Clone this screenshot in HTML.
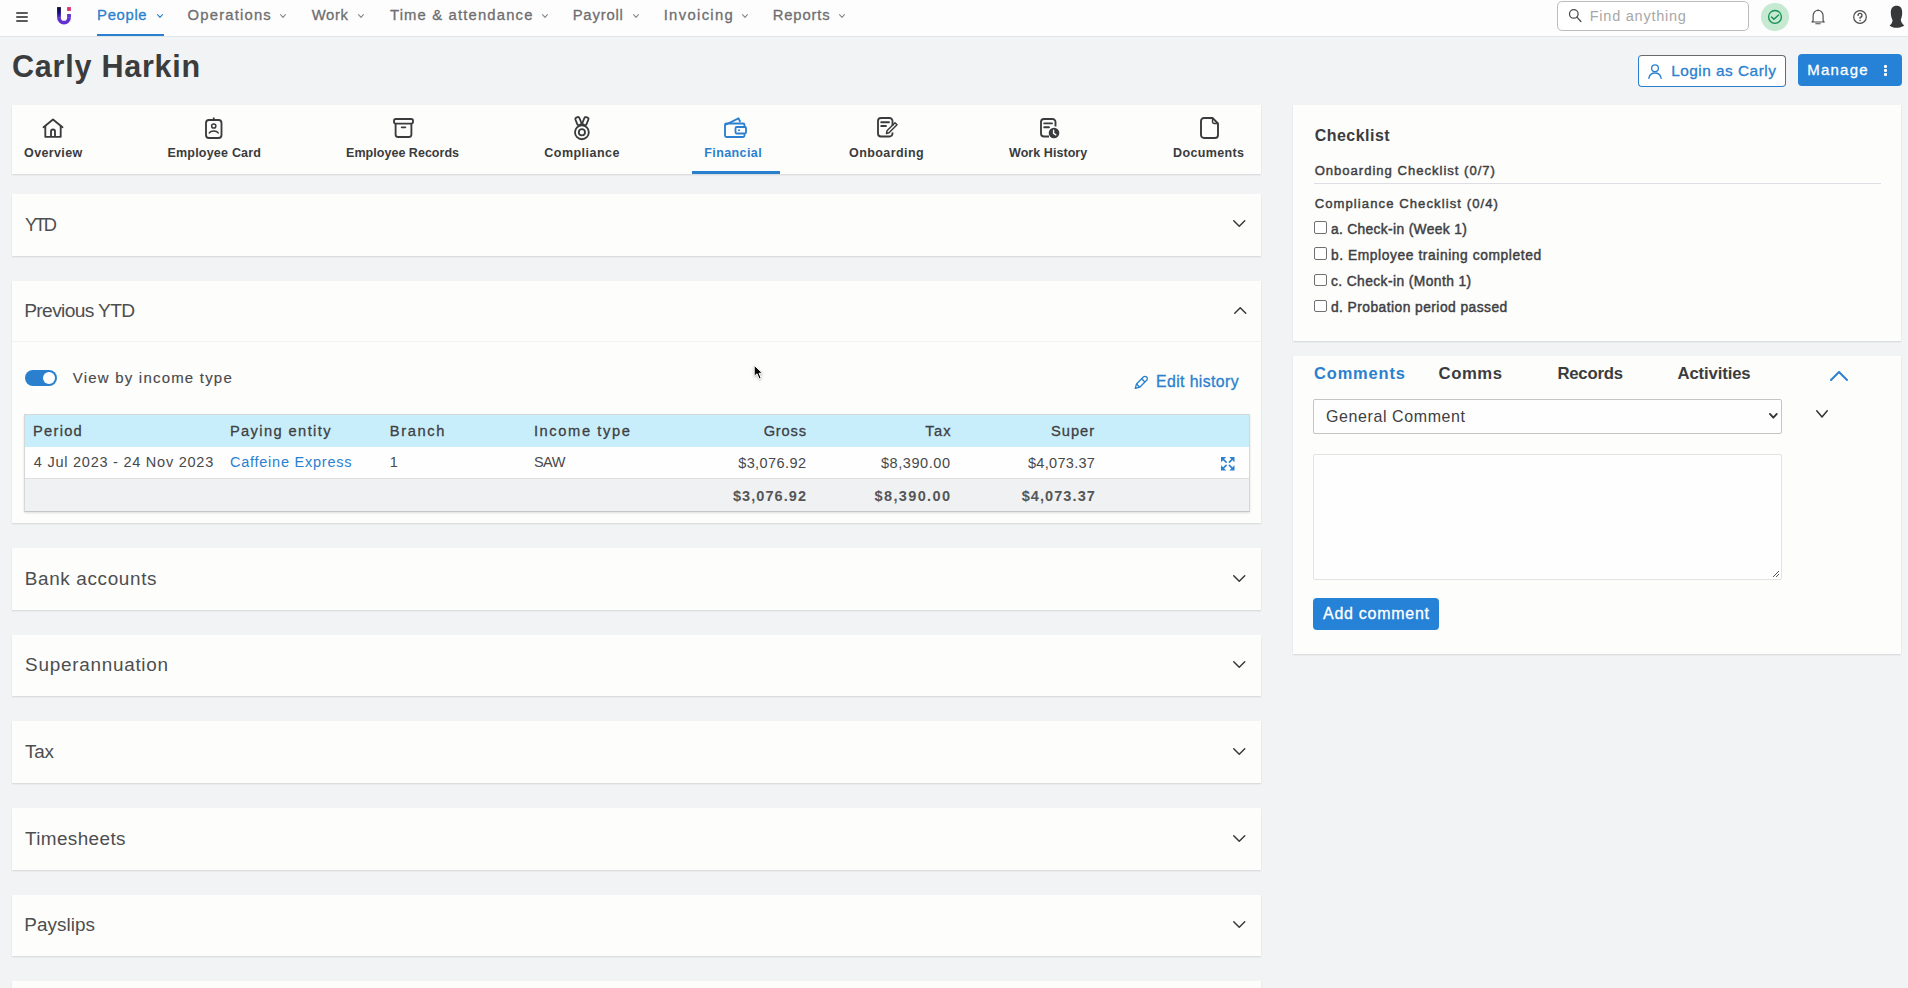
<!DOCTYPE html>
<html><head><meta charset="utf-8"><style>
html,body{margin:0;padding:0;}
body{width:1908px;height:988px;overflow:hidden;position:relative;background:#f1f3f4;font-family:"Liberation Sans",sans-serif;}
.t{position:absolute;white-space:pre;}
.b{position:absolute;}
.s{position:absolute;overflow:visible;}
</style></head><body>
<div class="b" style="left:0px;top:0px;width:1908px;height:37px;background:#fdfdfd;border-bottom:1px solid #dfe6ea;box-sizing:border-box;"></div>
<div class="b" style="left:16px;top:12.3px;width:12px;height:1.8000000000000007px;background:#5a5a5a;border-radius:1px;"></div>
<div class="b" style="left:16px;top:16.2px;width:12px;height:1.8000000000000007px;background:#5a5a5a;border-radius:1px;"></div>
<div class="b" style="left:16px;top:20.1px;width:12px;height:1.8000000000000007px;background:#5a5a5a;border-radius:1px;"></div>
<svg class="s" style="left:57px;top:7px;" width="14" height="18" viewBox="0 0 14 18"><defs><linearGradient id="lg" x1="0" y1="0" x2="0" y2="1"><stop offset="0" stop-color="#06052e"/><stop offset="0.55" stop-color="#1a0d8a"/><stop offset="1" stop-color="#6433cc"/></linearGradient></defs><rect x="0.1" y="0.1" width="3.8" height="10.8" fill="url(#lg)"/><path d="M2 10.7 A5.0 5.0 0 0 0 12 10.7" fill="none" stroke="#6231cf" stroke-width="3.8"/><rect x="10.1" y="7" width="3.8" height="3.8" fill="#6231cf"/><rect x="10.1" y="0.1" width="3.8" height="3.8" fill="#dc2f6e"/></svg>
<div class="t" style="left:97.10px;top:8.05px;font-size:14.83px;line-height:14.83px;letter-spacing:0.668px;font-weight:400;color:#2a80cf;-webkit-text-stroke:0.3px #2a80cf;">People</div>
<svg class="s" style="left:157px;top:14px;" width="6" height="4" viewBox="0 0 6 4"><polyline points="0.55,0.55 3.0,3.45 5.45,0.55" fill="none" stroke="#2a80cf" stroke-width="1.1" stroke-linecap="round" stroke-linejoin="round"/></svg>
<div class="b" style="left:97px;top:34px;width:67px;height:2px;background:#2a80cf;"></div>
<div class="t" style="left:187.56px;top:8.05px;font-size:14.83px;line-height:14.83px;letter-spacing:1.184px;font-weight:400;color:#6e6e70;-webkit-text-stroke:0.3px #6e6e70;">Operations</div>
<svg class="s" style="left:280px;top:14px;" width="6" height="4" viewBox="0 0 6 4"><polyline points="0.55,0.55 3.0,3.45 5.45,0.55" fill="none" stroke="#8a8a8a" stroke-width="1.1" stroke-linecap="round" stroke-linejoin="round"/></svg>
<div class="t" style="left:311.72px;top:8.05px;font-size:14.83px;line-height:14.83px;letter-spacing:0.627px;font-weight:400;color:#6e6e70;-webkit-text-stroke:0.3px #6e6e70;">Work</div>
<svg class="s" style="left:358px;top:14px;" width="6" height="4" viewBox="0 0 6 4"><polyline points="0.55,0.55 3.0,3.45 5.45,0.55" fill="none" stroke="#8a8a8a" stroke-width="1.1" stroke-linecap="round" stroke-linejoin="round"/></svg>
<div class="t" style="left:390.00px;top:8.05px;font-size:14.83px;line-height:14.83px;letter-spacing:1.154px;font-weight:400;color:#6e6e70;-webkit-text-stroke:0.3px #6e6e70;">Time &amp; attendance</div>
<svg class="s" style="left:542.3px;top:14px;" width="6" height="4" viewBox="0 0 6 4"><polyline points="0.55,0.55 3.0,3.45 5.45,0.55" fill="none" stroke="#8a8a8a" stroke-width="1.1" stroke-linecap="round" stroke-linejoin="round"/></svg>
<div class="t" style="left:572.66px;top:8.05px;font-size:14.83px;line-height:14.83px;letter-spacing:0.823px;font-weight:400;color:#6e6e70;-webkit-text-stroke:0.3px #6e6e70;">Payroll</div>
<svg class="s" style="left:632.6px;top:14px;" width="6" height="4" viewBox="0 0 6 4"><polyline points="0.55,0.55 3.0,3.45 5.45,0.55" fill="none" stroke="#8a8a8a" stroke-width="1.1" stroke-linecap="round" stroke-linejoin="round"/></svg>
<div class="t" style="left:663.66px;top:8.05px;font-size:14.83px;line-height:14.83px;letter-spacing:1.330px;font-weight:400;color:#6e6e70;-webkit-text-stroke:0.3px #6e6e70;">Invoicing</div>
<svg class="s" style="left:742px;top:14px;" width="6" height="4" viewBox="0 0 6 4"><polyline points="0.55,0.55 3.0,3.45 5.45,0.55" fill="none" stroke="#8a8a8a" stroke-width="1.1" stroke-linecap="round" stroke-linejoin="round"/></svg>
<div class="t" style="left:772.66px;top:8.05px;font-size:14.83px;line-height:14.83px;letter-spacing:0.860px;font-weight:400;color:#6e6e70;-webkit-text-stroke:0.3px #6e6e70;">Reports</div>
<svg class="s" style="left:838.9px;top:14px;" width="6" height="4" viewBox="0 0 6 4"><polyline points="0.55,0.55 3.0,3.45 5.45,0.55" fill="none" stroke="#8a8a8a" stroke-width="1.1" stroke-linecap="round" stroke-linejoin="round"/></svg>
<div class="b" style="left:1557px;top:1px;width:192px;height:30px;border:1px solid #bdbdbd;border-radius:5px;background:#fff;box-sizing:border-box;"></div>
<svg class="s" style="left:1567px;top:8px;" width="16" height="16" viewBox="0 0 16 16"><circle cx="6.8" cy="5.9" r="4.3" fill="none" stroke="#4a4a4a" stroke-width="1.25"/><line x1="9.9" y1="9.1" x2="13.9" y2="13.5" stroke="#4a4a4a" stroke-width="1.3" stroke-linecap="round"/></svg>
<div class="t" style="left:1589.74px;top:9.00px;font-size:14.53px;line-height:14.53px;letter-spacing:0.747px;font-weight:400;color:#a8a8a8;">Find anything</div>
<svg class="s" style="left:1761px;top:2.9px;" width="28" height="28" viewBox="0 0 28 28"><circle cx="14" cy="14" r="14" fill="#c5e9d1"/><circle cx="14" cy="13.9" r="6.4" fill="none" stroke="#178f55" stroke-width="1.35"/><polyline points="10.5,14.1 12.9,16.3 17.6,12.1" fill="none" stroke="#178f55" stroke-width="1.4" stroke-linecap="round" stroke-linejoin="round"/></svg>
<svg class="s" style="left:1811px;top:9px;" width="15" height="16" viewBox="0 0 15 16"><path d="M1 13 L2.1 11.8 V6.8 A5 5.6 0 0 1 12.1 6.8 V11.8 L13.2 13 Z" fill="none" stroke="#4a4a4a" stroke-width="1.15" stroke-linejoin="round"/><line x1="4.8" y1="14.7" x2="9.2" y2="14.7" stroke="#4a4a4a" stroke-width="1.1" stroke-linecap="round"/><circle cx="7" cy="1.4" r="0.8" fill="#4a4a4a"/></svg>
<svg class="s" style="left:1852px;top:9px;" width="16" height="16" viewBox="0 0 16 16"><circle cx="8" cy="8" r="6.3" fill="none" stroke="#4a4a4a" stroke-width="1.2"/><path d="M6.1 6.4 A1.95 1.95 0 1 1 8.1 8.3 V9.3" fill="none" stroke="#4a4a4a" stroke-width="1.3" stroke-linecap="round"/><circle cx="8.05" cy="11.4" r="0.75" fill="#4a4a4a"/></svg>
<svg class="s" style="left:1889px;top:5px;" width="17" height="23" viewBox="0 0 17 23"><path d="M7.6 0.8 C11.5 0.8 13.2 3.5 13.2 7.5 C13.2 11 12.3 13.5 11.8 14.8 C12 17 13.5 19.5 15.4 20.5 C13 22.3 10 22.8 7.6 22.8 C5 22.8 2.2 22.3 0.6 20.5 C2.3 19.5 3.6 17.5 3.5 15 C2.5 13 1.8 10.5 1.8 7.5 C1.8 3.5 3.8 0.8 7.6 0.8 Z" fill="#37383a"/></svg>
<div class="t" style="left:12.02px;top:51.26px;font-size:30.52px;line-height:30.52px;letter-spacing:0.758px;font-weight:700;color:#3b3c3e;">Carly Harkin</div>
<div class="b" style="left:1638px;top:55px;width:148px;height:32px;border:1px solid #2a80cf;border-top-color:#6a6a6a;border-right-color:#6a6a6a;border-radius:4px;background:#fff;box-sizing:border-box;"></div>
<svg class="s" style="left:1648px;top:63.5px;" width="14" height="15" viewBox="0 0 14 15"><circle cx="7" cy="4.2" r="3.4" fill="none" stroke="#2a80cf" stroke-width="1.3"/><path d="M0.8 14.4 C1.5 10.5 4 9 7 9 C10 9 12.5 10.5 13.2 14.4" fill="none" stroke="#2a80cf" stroke-width="1.3" stroke-linecap="round"/></svg>
<div class="t" style="left:1671.20px;top:62.86px;font-size:15.41px;line-height:15.41px;letter-spacing:0.478px;font-weight:400;color:#2a80cf;-webkit-text-stroke:0.3px #2a80cf;">Login as Carly</div>
<div class="b" style="left:1798px;top:54px;width:104px;height:32px;background:#2582d6;border-radius:4px;"></div>
<div class="t" style="left:1807.20px;top:63.33px;font-size:14.97px;line-height:14.97px;letter-spacing:1.268px;font-weight:400;color:#fff;-webkit-text-stroke:0.3px #fff;">Manage</div>
<div class="b" style="left:1883.5px;top:65px;width:3.0px;height:2.5999999999999943px;background:#fff;border-radius:1px;"></div>
<div class="b" style="left:1883.5px;top:69.2px;width:3.0px;height:2.5999999999999943px;background:#fff;border-radius:1px;"></div>
<div class="b" style="left:1883.5px;top:73.4px;width:3.0px;height:2.5999999999999943px;background:#fff;border-radius:1px;"></div>
<div class="b" style="left:12px;top:105px;width:1249px;height:69px;background:#fdfdfb;box-shadow:0 1px 1.5px rgba(0,0,0,0.12);"></div>
<div class="t" style="left:24.10px;top:147.12px;font-size:12.50px;line-height:12.50px;letter-spacing:0.366px;font-weight:700;color:#3a3b3d;">Overview</div>
<div class="t" style="left:167.46px;top:147.12px;font-size:12.50px;line-height:12.50px;letter-spacing:0.212px;font-weight:700;color:#3a3b3d;">Employee Card</div>
<div class="t" style="left:346.10px;top:147.12px;font-size:12.50px;line-height:12.50px;letter-spacing:0.027px;font-weight:700;color:#3a3b3d;">Employee Records</div>
<div class="t" style="left:544.28px;top:147.12px;font-size:12.50px;line-height:12.50px;letter-spacing:0.484px;font-weight:700;color:#3a3b3d;">Compliance</div>
<div class="t" style="left:704.20px;top:147.12px;font-size:12.50px;line-height:12.50px;letter-spacing:0.415px;font-weight:700;color:#2a80cf;">Financial</div>
<div class="t" style="left:849.10px;top:147.12px;font-size:12.50px;line-height:12.50px;letter-spacing:0.404px;font-weight:700;color:#3a3b3d;">Onboarding</div>
<div class="t" style="left:1009.00px;top:147.12px;font-size:12.50px;line-height:12.50px;letter-spacing:0.062px;font-weight:700;color:#3a3b3d;">Work History</div>
<div class="t" style="left:1173.00px;top:147.12px;font-size:12.50px;line-height:12.50px;letter-spacing:0.372px;font-weight:700;color:#3a3b3d;">Documents</div>
<div class="b" style="left:692px;top:171px;width:88px;height:3px;background:#2a80cf;"></div>
<svg class="s" style="left:42px;top:118px;" width="22" height="20" viewBox="0 0 22 20"><path d="M1.5 9.2 L11 1.5 L20.5 9.2" fill="none" stroke="#3a3b3d" stroke-width="1.85" stroke-linecap="round" stroke-linejoin="round"/><path d="M3.3 8 V18.8 H18.7 V8" fill="none" stroke="#3a3b3d" stroke-width="1.85" stroke-linejoin="round"/><path d="M9 18.8 V13.5 A2 2 0 0 1 13 13.5 V18.8" fill="none" stroke="#3a3b3d" stroke-width="1.85"/></svg>
<svg class="s" style="left:205px;top:117px;" width="18" height="22" viewBox="0 0 18 22"><rect x="1" y="3" width="15.5" height="18" rx="3" fill="none" stroke="#3a3b3d" stroke-width="1.85"/><line x1="8.75" y1="0.5" x2="8.75" y2="3" stroke="#3a3b3d" stroke-width="1.85"/><circle cx="8.75" cy="9" r="2.1" fill="none" stroke="#3a3b3d" stroke-width="1.5"/><path d="M4.3 16 C5.5 13.2 12 13.2 13.2 16" fill="none" stroke="#3a3b3d" stroke-width="1.5" stroke-linecap="round"/></svg>
<svg class="s" style="left:393px;top:118px;" width="21" height="20" viewBox="0 0 21 20"><rect x="1" y="1" width="19" height="4.6" rx="1.8" fill="none" stroke="#3a3b3d" stroke-width="1.85"/><path d="M2.6 5.6 V16.5 A2.5 2.5 0 0 0 5.1 19 H15.9 A2.5 2.5 0 0 0 18.4 16.5 V5.6" fill="none" stroke="#3a3b3d" stroke-width="1.85"/><line x1="8.7" y1="9.3" x2="12.3" y2="9.3" stroke="#3a3b3d" stroke-width="1.85" stroke-linecap="round"/></svg>
<svg class="s" style="left:573px;top:116px;" width="18" height="25" viewBox="0 0 18 25"><g fill="none" stroke="#3a3b3d" stroke-width="1.8"><rect x="3.2" y="1.1" width="4.3" height="8" rx="1.6" transform="rotate(-22 5.35 5.1)"/><rect x="10.3" y="1.1" width="4.3" height="8" rx="1.6" transform="rotate(22 12.45 5.1)"/></g><circle cx="8.9" cy="16.3" r="6.9" fill="#fdfdfb" stroke="#3a3b3d" stroke-width="1.85"/><circle cx="8.9" cy="16.2" r="3.1" fill="none" stroke="#3a3b3d" stroke-width="1.85"/></svg>
<svg class="s" style="left:724px;top:117px;" width="23" height="21" viewBox="0 0 23 21"><path d="M1 8 L14.5 1.3 L16.3 5" fill="none" stroke="#2a80cf" stroke-width="1.85" stroke-linejoin="round"/><rect x="1" y="6.5" width="19.5" height="13.5" rx="1.5" fill="none" stroke="#2a80cf" stroke-width="1.85"/><rect x="11.5" y="10" width="10.5" height="6.5" rx="1.2" fill="#fff" stroke="#2a80cf" stroke-width="1.85"/><circle cx="15" cy="13.2" r="1" fill="#2a80cf"/></svg>
<svg class="s" style="left:877px;top:117px;" width="21" height="21" viewBox="0 0 21 21"><path d="M15.5 9 V4 A3 3 0 0 0 12.5 1 H4 A3 3 0 0 0 1 4 V16.5 A3 3 0 0 0 4 19.5 H12.5 A3 3 0 0 0 15.5 16.5 V15.5" fill="none" stroke="#3a3b3d" stroke-width="1.85"/><line x1="4.2" y1="5.2" x2="12" y2="5.2" stroke="#3a3b3d" stroke-width="1.85" stroke-linecap="round"/><line x1="4.2" y1="9" x2="9" y2="9" stroke="#3a3b3d" stroke-width="1.85" stroke-linecap="round"/><path d="M9.5 16.5 L10 13.8 L18 5.8 L20 7.8 L12 15.8 Z" fill="none" stroke="#3a3b3d" stroke-width="1.5" stroke-linejoin="round"/></svg>
<svg class="s" style="left:1040px;top:117px;" width="20" height="22" viewBox="0 0 20 22"><path d="M15.5 9.5 V5 A3 3 0 0 0 12.5 2 H4 A3 3 0 0 0 1 5 V16.5 A3 3 0 0 0 4 19.5 H9" fill="none" stroke="#3a3b3d" stroke-width="1.85"/><line x1="4.2" y1="6.4" x2="12" y2="6.4" stroke="#3a3b3d" stroke-width="1.85" stroke-linecap="round"/><line x1="4.2" y1="10.2" x2="9" y2="10.2" stroke="#3a3b3d" stroke-width="1.85" stroke-linecap="round"/><circle cx="14" cy="16" r="5.3" fill="#3a3b3d"/><path d="M13.6 13.2 V16.3 L15.8 17.8" fill="none" stroke="#fff" stroke-width="1.4" stroke-linecap="round"/></svg>
<svg class="s" style="left:1200px;top:117px;" width="19" height="22" viewBox="0 0 19 22"><path d="M4 1 H12.5 L18 6.5 V18 A3 3 0 0 1 15 21 H4 A3 3 0 0 1 1 18 V4 A3 3 0 0 1 4 1 Z" fill="none" stroke="#3a3b3d" stroke-width="1.9" stroke-linejoin="round"/><path d="M12.5 1 V4.5 A2 2 0 0 0 14.5 6.5 H18" fill="none" stroke="#3a3b3d" stroke-width="1.4"/></svg>
<div class="b" style="left:12px;top:194px;width:1249px;height:62px;background:#fdfdfb;box-shadow:0 1px 1.5px rgba(0,0,0,0.12);"></div>
<div class="t" style="left:25.00px;top:216.30px;font-size:18.31px;line-height:18.31px;letter-spacing:-2.350px;font-weight:400;color:#4d4e50;">YTD</div>
<svg class="s" style="left:1233px;top:220px;" width="12.5" height="7" viewBox="0 0 12.5 7"><polyline points="0.75,0.75 6.25,6.25 11.75,0.75" fill="none" stroke="#3a3a3a" stroke-width="1.5" stroke-linecap="round" stroke-linejoin="round"/></svg>
<div class="b" style="left:12px;top:281px;width:1249px;height:242px;background:#fdfdfb;box-shadow:0 1px 1.5px rgba(0,0,0,0.12);"></div>
<div class="t" style="left:24.20px;top:300.96px;font-size:19.19px;line-height:19.19px;letter-spacing:-0.638px;font-weight:400;color:#4d4e50;">Previous YTD</div>
<svg class="s" style="left:1233.5px;top:307px;" width="12.5" height="7" viewBox="0 0 12.5 7"><polyline points="0.75,6.25 6.25,0.75 11.75,6.25" fill="none" stroke="#3a3a3a" stroke-width="1.5" stroke-linecap="round" stroke-linejoin="round"/></svg>
<div class="b" style="left:12px;top:341px;width:1249px;height:1px;background:#f1f2f3;"></div>
<div class="b" style="left:25px;top:370px;width:32px;height:16px;background:#2a80cf;border-radius:8px;"></div>
<div class="b" style="left:43.1px;top:371.9px;width:12.0px;height:12.0px;background:#fff;border-radius:50%;"></div>
<div class="t" style="left:72.82px;top:370.93px;font-size:14.97px;line-height:14.97px;letter-spacing:1.217px;font-weight:400;color:#4a4a4c;-webkit-text-stroke:0.15px #4a4a4c;">View by income type</div>
<svg class="s" style="left:1133px;top:374px;" width="16" height="16" viewBox="0 0 16 16"><g fill="none" stroke="#2a80cf" stroke-width="1.35" stroke-linejoin="round"><path d="M2.3 14.4 L3.5 9.94 L10.37 3.07 A2.3 2.3 0 0 1 13.63 6.33 L6.76 13.2 Z"/><line x1="3.5" y1="9.94" x2="6.76" y2="13.2"/><line x1="8.6" y1="4.84" x2="11.86" y2="8.1"/></g></svg>
<div class="t" style="left:1156.02px;top:374.09px;font-size:15.84px;line-height:15.84px;letter-spacing:0.393px;font-weight:400;color:#2a80cf;-webkit-text-stroke:0.3px #2a80cf;">Edit history</div>
<div class="b" style="left:24px;top:414px;width:1226px;height:98px;border:1px solid #d5d7d9;border-bottom-color:#c4c5c7;box-shadow:0 1px 2px rgba(0,0,0,0.12);background:#fefefe;box-sizing:border-box;"></div>
<div class="b" style="left:25px;top:415px;width:1224px;height:32px;background:#c9eefb;"></div>
<div class="b" style="left:25px;top:478px;width:1224px;height:33px;background:#eff1f3;border-top:1px solid #dcdee0;box-sizing:border-box;"></div>
<div class="t" style="left:33.02px;top:424.07px;font-size:14.68px;line-height:14.68px;letter-spacing:1.260px;font-weight:400;color:#3e4043;-webkit-text-stroke:0.3px #3e4043;">Period</div>
<div class="t" style="left:229.92px;top:424.47px;font-size:14.68px;line-height:14.68px;letter-spacing:1.385px;font-weight:400;color:#3e4043;-webkit-text-stroke:0.3px #3e4043;">Paying entity</div>
<div class="t" style="left:389.74px;top:424.47px;font-size:14.68px;line-height:14.68px;letter-spacing:1.640px;font-weight:400;color:#3e4043;-webkit-text-stroke:0.3px #3e4043;">Branch</div>
<div class="t" style="left:533.92px;top:424.47px;font-size:14.68px;line-height:14.68px;letter-spacing:1.608px;font-weight:400;color:#3e4043;-webkit-text-stroke:0.3px #3e4043;">Income type</div>
<div class="t" style="left:763.64px;top:424.47px;font-size:14.68px;line-height:14.68px;letter-spacing:0.835px;font-weight:400;color:#3e4043;-webkit-text-stroke:0.3px #3e4043;">Gross</div>
<div class="t" style="left:925.36px;top:424.47px;font-size:14.68px;line-height:14.68px;letter-spacing:1.190px;font-weight:400;color:#3e4043;-webkit-text-stroke:0.3px #3e4043;">Tax</div>
<div class="t" style="left:1051.10px;top:424.47px;font-size:14.68px;line-height:14.68px;letter-spacing:0.950px;font-weight:400;color:#3e4043;-webkit-text-stroke:0.3px #3e4043;">Super</div>
<div class="t" style="left:33.82px;top:455.30px;font-size:14.53px;line-height:14.53px;letter-spacing:0.749px;font-weight:400;color:#48494b;">4 Jul 2023 - 24 Nov 2023</div>
<div class="t" style="left:229.92px;top:455.40px;font-size:14.53px;line-height:14.53px;letter-spacing:0.755px;font-weight:400;color:#2a80cf;">Caffeine Express</div>
<div class="t" style="left:389.74px;top:455.40px;font-size:14.53px;line-height:14.53px;letter-spacing:0.000px;font-weight:400;color:#48494b;">1</div>
<div class="t" style="left:533.92px;top:455.40px;font-size:14.53px;line-height:14.53px;letter-spacing:-0.480px;font-weight:400;color:#48494b;">SAW</div>
<div class="t" style="left:738.18px;top:455.60px;font-size:14.53px;line-height:14.53px;letter-spacing:0.402px;font-weight:400;color:#48494b;">$3,076.92</div>
<div class="t" style="left:880.90px;top:455.60px;font-size:14.53px;line-height:14.53px;letter-spacing:0.563px;font-weight:400;color:#48494b;">$8,390.00</div>
<div class="t" style="left:1028.00px;top:455.60px;font-size:14.53px;line-height:14.53px;letter-spacing:0.288px;font-weight:400;color:#48494b;">$4,073.37</div>
<div class="t" style="left:733.00px;top:488.60px;font-size:14.53px;line-height:14.53px;letter-spacing:1.050px;font-weight:700;color:#555658;">$3,076.92</div>
<div class="t" style="left:874.54px;top:488.60px;font-size:14.53px;line-height:14.53px;letter-spacing:1.358px;font-weight:700;color:#555658;">$8,390.00</div>
<div class="t" style="left:1021.64px;top:488.60px;font-size:14.53px;line-height:14.53px;letter-spacing:1.083px;font-weight:700;color:#555658;">$4,073.37</div>
<svg class="s" style="left:1221px;top:457px;" width="13.5" height="13.5" viewBox="0 0 13.5 13.5"><g fill="#2a80cf"><path d="M0 0 H5.2 L0 5.2 Z"/><path d="M13.5 0 H8.3 L13.5 5.2 Z"/><path d="M0 13.5 V8.3 L5.2 13.5 Z"/><path d="M13.5 13.5 H8.3 L13.5 8.3 Z"/></g><g stroke="#2a80cf" stroke-width="1.6" stroke-linecap="round"><line x1="1.5" y1="1.5" x2="5.1" y2="5.1"/><line x1="12" y1="1.5" x2="8.4" y2="5.1"/><line x1="1.5" y1="12" x2="5.1" y2="8.4"/><line x1="12" y1="12" x2="8.4" y2="8.4"/></g></svg>
<div class="b" style="left:12px;top:548px;width:1249px;height:62px;background:#fdfdfb;box-shadow:0 1px 1.5px rgba(0,0,0,0.12);"></div>
<div class="t" style="left:24.74px;top:569.91px;font-size:18.90px;line-height:18.90px;letter-spacing:0.657px;font-weight:400;color:#4d4e50;">Bank accounts</div>
<svg class="s" style="left:1233px;top:574.5px;" width="12.5" height="7" viewBox="0 0 12.5 7"><polyline points="0.75,0.75 6.25,6.25 11.75,0.75" fill="none" stroke="#3a3a3a" stroke-width="1.5" stroke-linecap="round" stroke-linejoin="round"/></svg>
<div class="b" style="left:12px;top:635px;width:1249px;height:61px;background:#fdfdfb;box-shadow:0 1px 1.5px rgba(0,0,0,0.12);"></div>
<div class="t" style="left:25.10px;top:655.81px;font-size:18.90px;line-height:18.90px;letter-spacing:0.735px;font-weight:400;color:#4d4e50;">Superannuation</div>
<svg class="s" style="left:1233px;top:661.0px;" width="12.5" height="7" viewBox="0 0 12.5 7"><polyline points="0.75,0.75 6.25,6.25 11.75,0.75" fill="none" stroke="#3a3a3a" stroke-width="1.5" stroke-linecap="round" stroke-linejoin="round"/></svg>
<div class="b" style="left:12px;top:721px;width:1249px;height:62px;background:#fdfdfb;box-shadow:0 1px 1.5px rgba(0,0,0,0.12);"></div>
<div class="t" style="left:25.00px;top:742.71px;font-size:18.90px;line-height:18.90px;letter-spacing:-0.200px;font-weight:400;color:#4d4e50;">Tax</div>
<svg class="s" style="left:1233px;top:747.5px;" width="12.5" height="7" viewBox="0 0 12.5 7"><polyline points="0.75,0.75 6.25,6.25 11.75,0.75" fill="none" stroke="#3a3a3a" stroke-width="1.5" stroke-linecap="round" stroke-linejoin="round"/></svg>
<div class="b" style="left:12px;top:808px;width:1249px;height:62px;background:#fdfdfb;box-shadow:0 1px 1.5px rgba(0,0,0,0.12);"></div>
<div class="t" style="left:25.00px;top:829.71px;font-size:18.90px;line-height:18.90px;letter-spacing:0.393px;font-weight:400;color:#4d4e50;">Timesheets</div>
<svg class="s" style="left:1233px;top:834.5px;" width="12.5" height="7" viewBox="0 0 12.5 7"><polyline points="0.75,0.75 6.25,6.25 11.75,0.75" fill="none" stroke="#3a3a3a" stroke-width="1.5" stroke-linecap="round" stroke-linejoin="round"/></svg>
<div class="b" style="left:12px;top:895px;width:1249px;height:61px;background:#fdfdfb;box-shadow:0 1px 1.5px rgba(0,0,0,0.12);"></div>
<div class="t" style="left:24.30px;top:915.71px;font-size:18.90px;line-height:18.90px;letter-spacing:0.054px;font-weight:400;color:#4d4e50;">Payslips</div>
<svg class="s" style="left:1233px;top:921.0px;" width="12.5" height="7" viewBox="0 0 12.5 7"><polyline points="0.75,0.75 6.25,6.25 11.75,0.75" fill="none" stroke="#3a3a3a" stroke-width="1.5" stroke-linecap="round" stroke-linejoin="round"/></svg>
<div class="b" style="left:12px;top:981px;width:1249px;height:19px;background:#fdfdfb;box-shadow:0 1px 1.5px rgba(0,0,0,0.12);"></div>
<div class="b" style="left:1293px;top:105px;width:608px;height:236px;background:#fdfdfb;box-shadow:0 1px 1.5px rgba(0,0,0,0.12);"></div>
<div class="t" style="left:1314.64px;top:128.37px;font-size:15.99px;line-height:15.99px;letter-spacing:0.488px;font-weight:700;color:#3b3c3e;">Checklist</div>
<div class="t" style="left:1314.64px;top:163.83px;font-size:13.08px;line-height:13.08px;letter-spacing:0.990px;font-weight:400;color:#3e3f43;-webkit-text-stroke:0.45px #3e3f43;">Onboarding Checklist (0/7)</div>
<div class="b" style="left:1314px;top:183px;width:567px;height:1px;background:#dcdfe3;"></div>
<div class="t" style="left:1314.64px;top:196.83px;font-size:13.08px;line-height:13.08px;letter-spacing:1.082px;font-weight:400;color:#3e3f43;-webkit-text-stroke:0.45px #3e3f43;">Compliance Checklist (0/4)</div>
<div class="b" style="left:1314.3px;top:221.1px;width:12.5px;height:12.5px;border:1px solid #707070;border-radius:2px;background:#fff;box-sizing:border-box;"></div>
<div class="t" style="left:1330.90px;top:223.11px;font-size:13.81px;line-height:13.81px;letter-spacing:0.347px;font-weight:400;color:#3e3f43;-webkit-text-stroke:0.45px #3e3f43;">a. Check-in (Week 1)</div>
<div class="b" style="left:1314.3px;top:247.3px;width:12.5px;height:12.5px;border:1px solid #707070;border-radius:2px;background:#fff;box-sizing:border-box;"></div>
<div class="t" style="left:1330.90px;top:249.01px;font-size:13.81px;line-height:13.81px;letter-spacing:0.583px;font-weight:400;color:#3e3f43;-webkit-text-stroke:0.45px #3e3f43;">b. Employee training completed</div>
<div class="b" style="left:1314.3px;top:273.6px;width:12.5px;height:12.5px;border:1px solid #707070;border-radius:2px;background:#fff;box-sizing:border-box;"></div>
<div class="t" style="left:1330.90px;top:275.11px;font-size:13.81px;line-height:13.81px;letter-spacing:0.420px;font-weight:400;color:#3e3f43;-webkit-text-stroke:0.45px #3e3f43;">c. Check-in (Month 1)</div>
<div class="b" style="left:1314.3px;top:299.5px;width:12.5px;height:12.5px;border:1px solid #707070;border-radius:2px;background:#fff;box-sizing:border-box;"></div>
<div class="t" style="left:1330.90px;top:301.01px;font-size:13.81px;line-height:13.81px;letter-spacing:0.456px;font-weight:400;color:#3e3f43;-webkit-text-stroke:0.45px #3e3f43;">d. Probation period passed</div>
<div class="b" style="left:1293px;top:356px;width:608px;height:298px;background:#fdfdfb;box-shadow:0 1px 1.5px rgba(0,0,0,0.12);"></div>
<div class="t" style="left:1314.00px;top:364.90px;font-size:16.42px;line-height:16.42px;letter-spacing:0.886px;font-weight:700;color:#2a80cf;">Comments</div>
<div class="t" style="left:1438.54px;top:365.85px;font-size:16.72px;line-height:16.72px;letter-spacing:0.540px;font-weight:700;color:#3b3c3e;">Comms</div>
<div class="t" style="left:1557.46px;top:365.85px;font-size:16.72px;line-height:16.72px;letter-spacing:-0.227px;font-weight:700;color:#3b3c3e;">Records</div>
<div class="t" style="left:1677.54px;top:365.85px;font-size:16.72px;line-height:16.72px;letter-spacing:-0.133px;font-weight:700;color:#3b3c3e;">Activities</div>
<svg class="s" style="left:1830px;top:371px;" width="18" height="10" viewBox="0 0 18 10"><polyline points="1.0,9.0 9.0,1.0 17.0,9.0" fill="none" stroke="#2a80cf" stroke-width="2" stroke-linecap="round" stroke-linejoin="round"/></svg>
<div class="b" style="left:1313px;top:399px;width:469px;height:35px;border:1px solid #c5c5c5;border-radius:2px;background:#fefefe;box-sizing:border-box;"></div>
<div class="t" style="left:1326.00px;top:409.17px;font-size:15.99px;line-height:15.99px;letter-spacing:0.600px;font-weight:400;color:#3f4042;">General Comment</div>
<svg class="s" style="left:1768.5px;top:413.3px;" width="8.7" height="5.6" viewBox="0 0 8.7 5.6"><polyline points="0.9,0.9 4.35,4.699999999999999 7.799999999999999,0.9" fill="none" stroke="#333" stroke-width="1.8" stroke-linecap="round" stroke-linejoin="round"/></svg>
<svg class="s" style="left:1816px;top:410.2px;" width="12" height="7.7" viewBox="0 0 12 7.7"><polyline points="0.75,0.75 6.0,6.95 11.25,0.75" fill="none" stroke="#333" stroke-width="1.5" stroke-linecap="round" stroke-linejoin="round"/></svg>
<div class="b" style="left:1313px;top:454px;width:469px;height:126px;border:1px solid #e3e3e3;border-radius:2px;background:#fefefe;box-sizing:border-box;"></div>
<svg class="s" style="left:1772px;top:570px;" width="8" height="8" viewBox="0 0 8 8"><line x1="1" y1="7" x2="7" y2="1" stroke="#555" stroke-width="1"/><line x1="4" y1="7" x2="7" y2="4" stroke="#555" stroke-width="1"/></svg>
<div class="b" style="left:1313px;top:598px;width:126px;height:32px;background:#2582d6;border-radius:4px;"></div>
<div class="t" style="left:1323.00px;top:606.47px;font-size:15.99px;line-height:15.99px;letter-spacing:0.740px;font-weight:400;color:#fff;-webkit-text-stroke:0.3px #fff;">Add comment</div>
<svg class="s" style="left:752px;top:363px;" width="12" height="18" viewBox="0 0 12 18"><path d="M2.2 2.3 L2.2 13.3 L5 10.8 L7.1 15.9 L9.2 15.1 L7.1 10.3 L10.6 10.3 Z" fill="#0a0a0a" stroke="#fff" stroke-width="1" stroke-linejoin="round" style="filter:drop-shadow(0 1px 1px rgba(0,0,0,.25))"/></svg>
</body></html>
